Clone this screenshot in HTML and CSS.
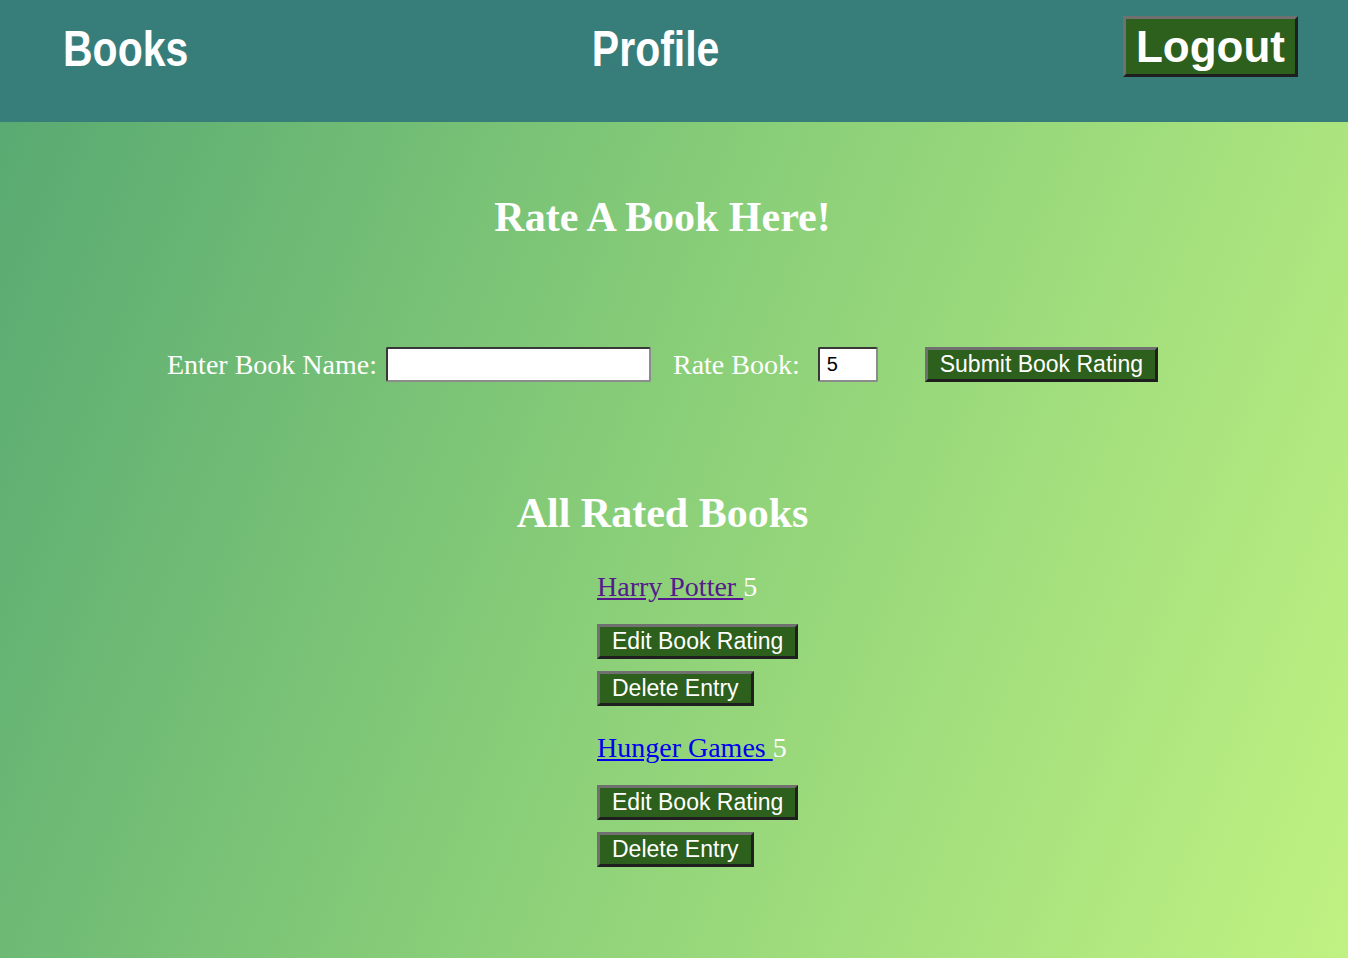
FILE: index.html
```html
<!DOCTYPE html>
<html lang="en">
<head>
<meta charset="utf-8">
<title>Books</title>
<link rel="stylesheet" href="styles.css">
</head>
<body>
<header class="topbar">
  <a class="nav-link" href="#">Books</a>
  <a class="nav-link" href="#">Profile</a>
  <button class="btn btn-logout" type="button">Logout</button>
</header>
<main class="content">
  <h1 class="title">Rate A Book Here!</h1>
  <form class="rate-form">
    <label class="form-label" for="book">Enter Book Name:</label>
    <input class="field field-name" id="book" type="text">
    <label class="form-label label-rate" for="rate">Rate Book:</label>
    <input class="field field-rate" id="rate" type="text" value="5">
    <button class="btn btn-submit" type="button">Submit Book Rating</button>
  </form>
  <h2 class="title title-list">All Rated Books</h2>
  <div class="book-list">
    <div class="entry">
      <div class="entry-line"><a class="book-link visited" href="#">Harry Potter </a>5</div>
      <button class="btn" type="button">Edit Book Rating</button>
      <button class="btn" type="button">Delete Entry</button>
    </div>
    <div class="entry">
      <div class="entry-line"><a class="book-link" href="#">Hunger Games </a>5</div>
      <button class="btn" type="button">Edit Book Rating</button>
      <button class="btn" type="button">Delete Entry</button>
    </div>
  </div>
</main>
</body>
</html>
```

FILE: styles.css
```css
html, body {
  margin: 0;
  padding: 0;
}
body {
  min-height: 958px;
  background: linear-gradient(112deg, #56a872 0%, #86cc78 45%, #c0f282 100%);
  font-family: "Liberation Serif", "Times New Roman", serif;
  color: #ffffff;
}
.topbar {
  box-sizing: border-box;
  height: 122px;
  background: #377e7b;
  display: flex;
  justify-content: space-between;
  align-items: flex-start;
  padding: 16px 50px 0 63px;
}
.nav-link {
  display: inline-block;
  margin-top: 5px;
  font-family: "Liberation Sans", Arial, sans-serif;
  font-weight: bold;
  font-size: 41px;
  line-height: 47px;
  color: #ffffff;
  text-decoration: none;
  transform: scaleY(1.22);
  transform-origin: top center;
}
.btn {
  font-family: "Liberation Sans", Arial, sans-serif;
  font-size: 23px;
  line-height: 27px;
  color: #ffffff;
  background: #2d5f1d;
  border: 3px solid;
  border-color: #707070 #1f1f1f #1f1f1f #707070;
  padding: 1px 12px;
  margin: 0;
  cursor: pointer;
}
.btn-logout {
  font-size: 44px;
  font-weight: bold;
  line-height: 51px;
  padding: 2px 10px;
}
.content {
  padding: 0 23px 0 0;
}
.title {
  margin: 71px 0 0;
  text-align: center;
  font-size: 42px;
  line-height: 48px;
  font-weight: bold;
}
.title-list {
  margin-top: 107px;
}
.rate-form {
  margin-top: 106px;
  display: flex;
  justify-content: center;
  align-items: center;
}
.form-label {
  font-size: 28px;
  line-height: 32px;
  margin-right: 9px;
}
.label-rate {
  margin-left: 22px;
  margin-right: 18px;
}
.field {
  box-sizing: border-box;
  height: 35px;
  background: #ffffff;
  border: 2px inset #8c8c8c;
  border-radius: 2px;
  padding: 0 7px;
  margin: 0;
  font-family: "Liberation Sans", Arial, sans-serif;
  font-size: 20px;
  color: #000000;
}
.field-name {
  width: 265px;
}
.field-rate {
  width: 60px;
}
.btn-submit {
  margin-left: 47px;
}
.book-list {
  margin-top: 34px;
  padding-left: 597px;
}
.entry {
  display: flex;
  flex-direction: column;
  align-items: flex-start;
  gap: 12px;
  margin-bottom: 26px;
}
.entry-line {
  font-size: 28px;
  line-height: 32px;
  margin-bottom: 9px;
}
.book-link {
  color: #0000ee;
}
.book-link.visited {
  color: #551a8b;
}
```
